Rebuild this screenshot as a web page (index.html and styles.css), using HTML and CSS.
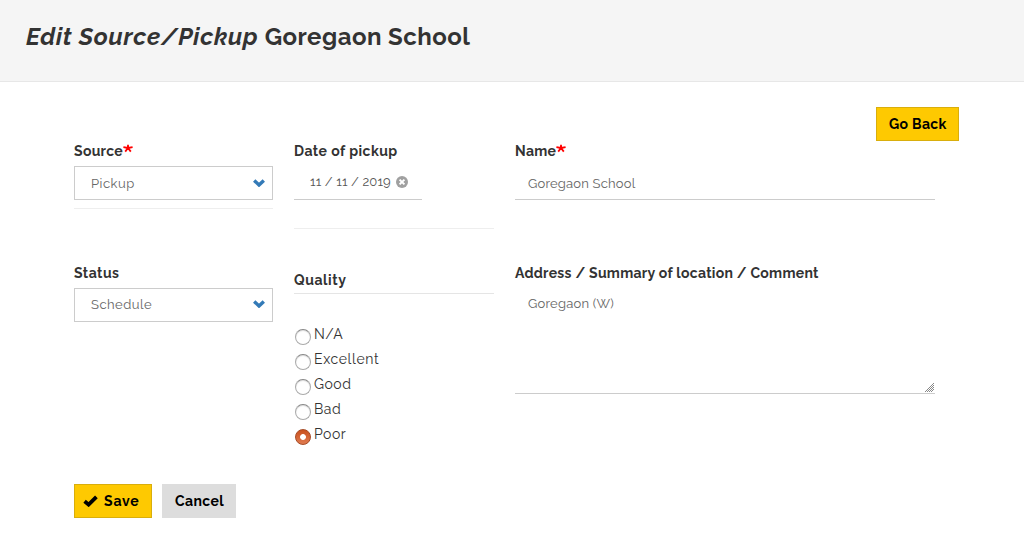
FILE: index.html
```html
<!DOCTYPE html>
<html lang="en">
<head>
<meta charset="utf-8">
<title>Edit Source/Pickup Goregaon School</title>
<link rel="stylesheet" href="styles.css">
</head>
<body>
<header class="page-header"><h1 class="title"><em class="title-em">Edit Source/Pickup</em> <span class="title-name">Goregaon School</span></h1></header>
<main class="main">
  <div class="top-actions"><button class="btn btn-primary btn-back"><span class="t-back">Go Back</span></button></div>
  <form class="columns">
    <div class="col">
      <div class="label"><span class="t-source">Source</span><svg class="required" viewBox="0 0 10 9"><path d="M5 4V.8M5 4L.4 3.2M5 4l4.6-.8M5 4L2.2 7.6M5 4L7.8 7.6"/></svg></div>
      <div class="select"><span class="t-pickup">Pickup</span><svg class="chevron" viewBox="0 0 12 8"><path d="M1.2 1.4L6 6l4.8-4.6"/></svg></div>
      <div class="rule rule-source"></div>
      <div class="label label-status"><span class="t-status">Status</span></div>
      <div class="select select-status"><span class="t-schedule">Schedule</span><svg class="chevron" viewBox="0 0 12 8"><path d="M1.2 1.4L6 6l4.8-4.6"/></svg></div>
    </div>
    <div class="col">
      <div class="label"><span class="t-date">Date of pickup</span></div>
      <div class="date"><span class="t-value">11 / 11 / 2019</span><svg class="clear" viewBox="0 0 12 12"><circle cx="6" cy="6" r="6"/><path d="M3.6 3.6l4.8 4.8M8.4 3.6L3.6 8.4"/></svg></div>
      <div class="rule rule-date"></div>
      <div class="label legend"><span class="t-quality">Quality</span></div>
      <div class="radios">
        <label class="radio"><i class="dot"></i><span class="t-na">N/A</span></label>
        <label class="radio"><i class="dot"></i><span class="t-excellent">Excellent</span></label>
        <label class="radio"><i class="dot"></i><span class="t-good">Good</span></label>
        <label class="radio"><i class="dot"></i><span class="t-bad">Bad</span></label>
        <label class="radio"><i class="dot dot-on"></i><span class="t-poor">Poor</span></label>
      </div>
    </div>
    <div class="col">
      <div class="label"><span class="t-name">Name</span><svg class="required" viewBox="0 0 10 9"><path d="M5 4V.8M5 4L.4 3.2M5 4l4.6-.8M5 4L2.2 7.6M5 4L7.8 7.6"/></svg></div>
      <div class="input"><span class="t-school">Goregaon School</span></div>
      <div class="label label-address"><span class="t-address">Address / Summary of location / Comment</span></div>
      <div class="textarea"><span class="t-area">Goregaon (W)</span><svg class="grip" viewBox="0 0 9 9"><path d="M0 9L9 0M2 9l7-7M4 9l5-5M6 9l3-3"/></svg></div>
    </div>
  </form>
  <div class="actions">
    <button class="btn btn-primary btn-save"><svg class="check" viewBox="0 0 15 12"><path d="M1.6 6.2l4 3.4L13.4 1.8"/></svg><span class="t-save">Save</span></button>
    <button class="btn btn-cancel"><span class="t-cancel">Cancel</span></button>
  </div>
</main>
</body>
</html>
```
FILE: styles.css
```css
* { box-sizing: border-box; }
body { margin: 0; background: #fff; color: #333; font: 14px/20px Raleway, Lato, sans-serif; }
span, em { white-space: nowrap; }
.page-header { height: 82px; padding: 22px 26px 0; background: #f5f5f5; border-bottom: 1px solid #e7e7e7; }
.title { margin: 0; font-size: 24px; line-height: 30px; font-weight: 700; letter-spacing: .45px; }
.title-em { letter-spacing: .72px; }
.title-name { letter-spacing: .47px; }
.main { padding: 25px 65px 0 74px; }
.top-actions { display: flex; justify-content: flex-end; height: 34px; }
.btn { display: flex; align-items: center; height: 34px; margin: 0; padding: 0 12px; border: 1px solid transparent; font: 700 14px/20px Raleway, Lato, sans-serif; color: #000; letter-spacing: .4px; }
.btn-primary { background: #fec901; border-color: #d9ae0c; }
.btn-back { width: 83px; letter-spacing: .35px; }
.columns { display: grid; grid-template-columns: 199px 200px 420px; column-gap: 21px; height: 343px; }
.label { display: flex; height: 20px; font-weight: 700; letter-spacing: .3px; }
.t-status, .t-date { letter-spacing: .45px; }
.t-quality { letter-spacing: .6px; }
.t-address { letter-spacing: .28px; }
.required { width: 10px; height: 9px; margin-top: 3px; fill: none; stroke: #f00; stroke-width: 1.8; }
.t-source + .required { margin-left: -.5px; }
.select { display: flex; align-items: center; justify-content: space-between; height: 34px; margin-top: 5px; padding: 0 7px 0 16px; border: 1px solid #ccc; color: #666; font-size: 13px; letter-spacing: .5px; }
.t-pickup { padding-top: 2px; }
.chevron { width: 12px; height: 8px; fill: none; stroke: #337ab7; stroke-width: 3.4; }
.select-status .chevron { margin-bottom: 2px; }
.rule { height: 1px; background: #eee; }
.rule-source { margin-top: 8px; }
.label-status { margin-top: 54px; }
.date { display: flex; align-items: center; width: 128px; height: 34px; margin-top: 5px; padding: 0 14px 2px 16px; justify-content: space-between; border-bottom: 1px solid #ccc; font-size: 13px; color: #555; letter-spacing: .12px; }
.clear { width: 12px; height: 12px; margin-top: 1px; fill: #a0a0a0; stroke: #fff; stroke-width: 2; }
.clear circle { stroke: none; }
.rule-date { margin-top: 28px; }
.legend { height: 24px; margin-top: 41px; border-bottom: 1px solid #e5e5e5; }
.radios { margin-top: 30px; }
.radio { display: flex; height: 25px; line-height: 20px; letter-spacing: .5px; }
.t-excellent { letter-spacing: .62px; }
.dot { width: 16px; height: 16px; margin: 5px 3px 0 1px; border: 1px solid #aaa; border-top-color: #888; border-radius: 50%; background: #fff; box-shadow: inset 0 1px 1px #ddd; }
.dot-on { border-color: #a64b25; background: radial-gradient(circle, #fff 0 2.5px, transparent 3.3px), linear-gradient(#c9501d, #e07b50); box-shadow: none; }
.input { height: 34px; margin-top: 5px; padding: 8px 13px 5px; border-bottom: 1px solid #ccc; color: #666; font-size: 13px; letter-spacing: .2px; }
.label-address { margin-top: 63px; }
.textarea { display: flex; justify-content: space-between; height: 106px; margin-top: 5px; padding: 6px 1px 1px 13px; border-bottom: 1px solid #ccc; color: #666; font-size: 13px; letter-spacing: .22px; }
.grip { align-self: flex-end; width: 9px; height: 9px; fill: none; stroke: #888; stroke-width: 1; }
.actions { display: flex; gap: 10px; }
.btn-save { width: 78px; padding: 0 0 0 8px; gap: 6px; letter-spacing: .85px; }
.check { width: 15px; height: 12px; margin-bottom: 1px; fill: none; stroke: #000; stroke-width: 3.8; }
.btn-cancel { width: 74px; background: #ddd; }
```
